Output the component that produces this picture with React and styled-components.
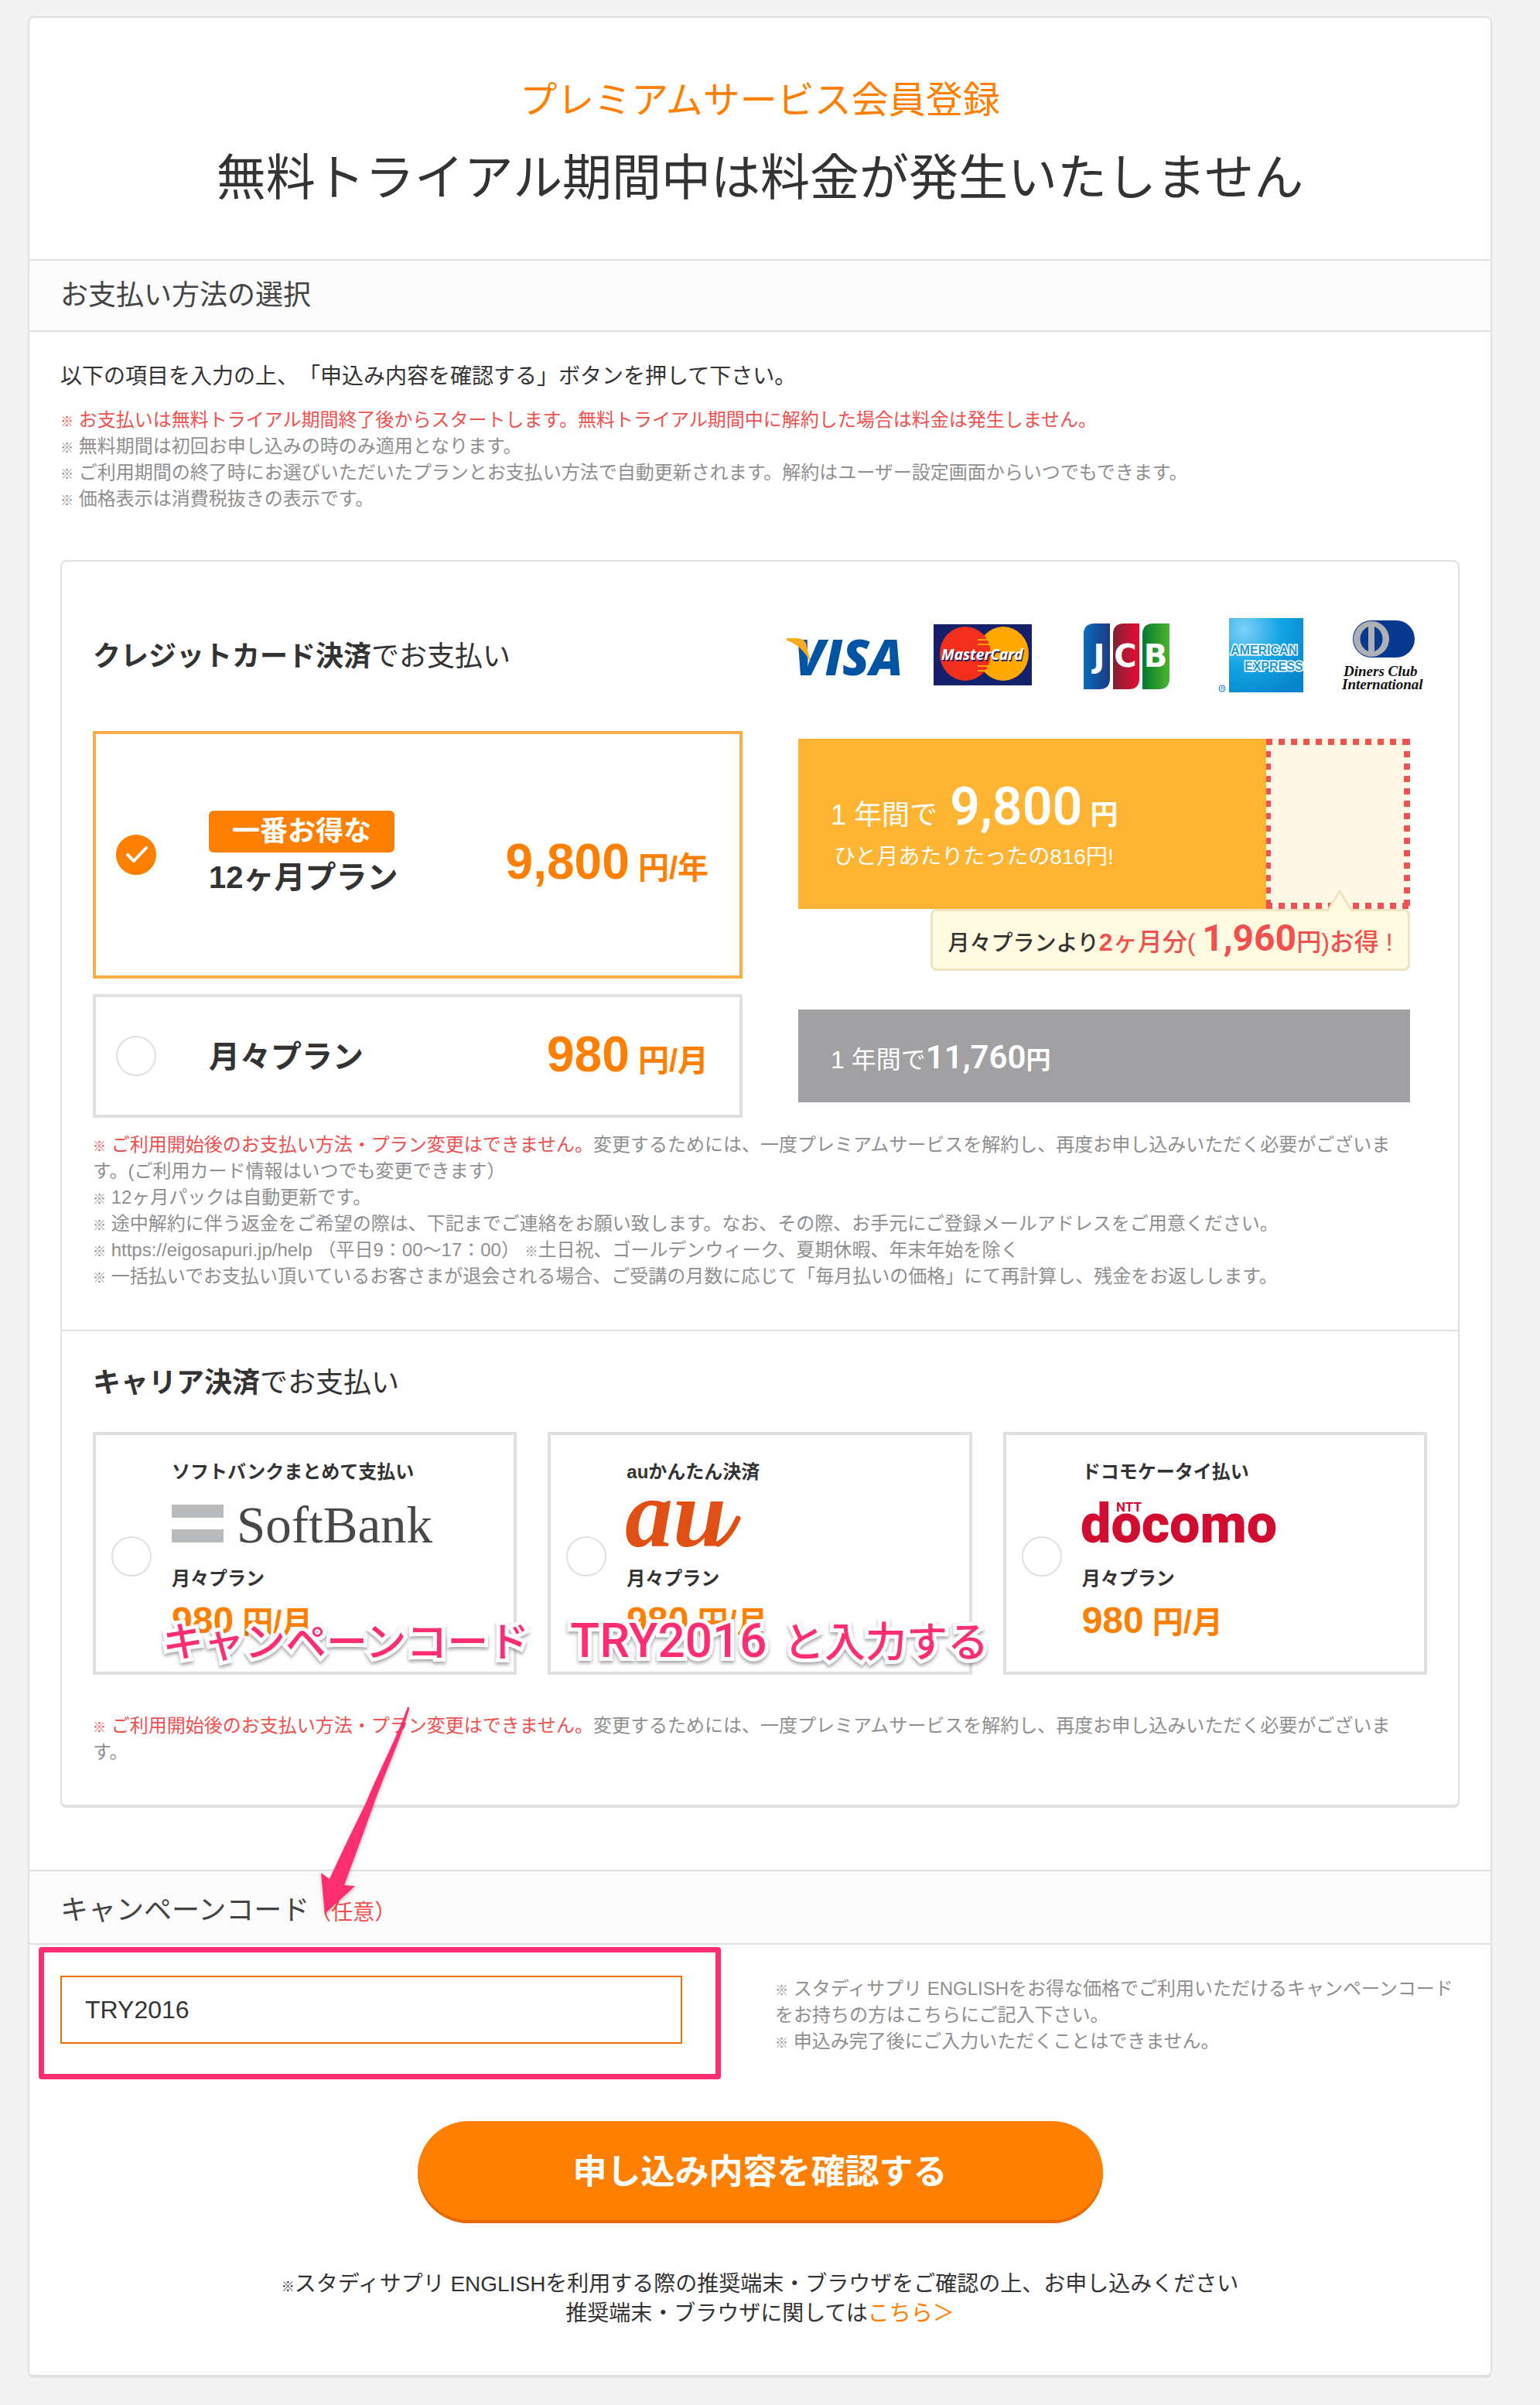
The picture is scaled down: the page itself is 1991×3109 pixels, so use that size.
import { useState } from "react";
import styled, { createGlobalStyle } from "styled-components";

const sans = `"Liberation Sans", "Noto Sans CJK JP", sans-serif`;

const carriers = [
  { id: "softbank", name: "ソフトバンクまとめて支払い", Logo: SoftBankLogo },
  { id: "au", name: "auかんたん決済", Logo: AuLogo },
  { id: "docomo", name: "ドコモケータイ払い", Logo: DocomoLogo },
];

const App = () => {
  const [plan, setPlan] = useState("year");
  const [code, setCode] = useState("TRY2016");

  return (
    <>
      <GlobalStyle />
      <Page>
        <Panel>
          <Hero>
            <HeroSub>プレミアムサービス会員登録</HeroSub>
            <HeroTitle>無料トライアル期間中は料金が発生いたしません</HeroTitle>
          </Hero>

          <Band>お支払い方法の選択</Band>
          <Payment>
            <Lead>以下の項目を入力の上、「申込み内容を確認する」ボタンを押して下さい。</Lead>
            <Notes>
              <li>
                <Red>
                  <Mark>※</Mark> お支払いは無料トライアル期間終了後からスタートします。無料トライアル期間中に解約した場合は料金は発生しません。
                </Red>
              </li>
              <li>
                <Mark>※</Mark> 無料期間は初回お申し込みの時のみ適用となります。
              </li>
              <li>
                <Mark>※</Mark> ご利用期間の終了時にお選びいただいたプランとお支払い方法で自動更新されます。解約はユーザー設定画面からいつでもできます。
              </li>
              <li>
                <Mark>※</Mark> 価格表示は消費税抜きの表示です。
              </li>
            </Notes>

            <Card>
              <Credit>
                <CreditHead>
                  <CardTitle>
                    <b>クレジットカード決済</b>でお支払い
                  </CardTitle>
                  <CardBrands />
                </CreditHead>
                <Plans>
                  <Plan $tall $on={plan === "year"}>
                    <Radio value="year" plan={plan} setPlan={setPlan} />
                    <PlanName>
                      <Badge>一番お得な</Badge>
                      12ヶ月プラン
                    </PlanName>
                    <Price $drop={26}>
                      <b>9,800</b> 円/年
                    </Price>
                  </Plan>
                  <YearChart>
                    <Bars>
                      <YearBar>
                        <BarLine>
                          1 年間で <BarNum $size={68}>9,800</BarNum> <b>円</b>
                        </BarLine>
                        <BarSub>ひと月あたりたったの816円!</BarSub>
                      </YearBar>
                      <Saved />
                    </Bars>
                    <Bubble>
                      <Tip viewBox="0 0 32 28">
                        <path d="M0 28 L16 2 L32 28" fill="#fffae0" stroke="#eee4bf" strokeWidth="3" />
                      </Tip>
                      月々プランより
                      <Saving>
                        <b>2</b>ヶ月分( <BubbleNum>1,960</BubbleNum>円)お得 !
                      </Saving>
                    </Bubble>
                  </YearChart>

                  <Plan $on={plan === "month"}>
                    <Radio value="month" plan={plan} setPlan={setPlan} />
                    <PlanName>月々プラン</PlanName>
                    <Price $drop={4}>
                      <b>980</b> 円/月
                    </Price>
                  </Plan>
                  <MonthChart>
                    <MonthBar>
                      1 年間で<BarNum $size={42}>11,760</BarNum>
                      <b>円</b>
                    </MonthBar>
                  </MonthChart>
                </Plans>
                <CardNotes>
                  <li>
                    <Red>
                      <Mark>※</Mark> ご利用開始後のお支払い方法・プラン変更はできません。
                    </Red>
                    変更するためには、一度プレミアムサービスを解約し、再度お申し込みいただく必要がございます。(ご利用カード情報はいつでも変更できます）
                  </li>
                  <li>
                    <Mark>※</Mark> 12ヶ月パックは自動更新です。
                  </li>
                  <li>
                    <Mark>※</Mark> 途中解約に伴う返金をご希望の際は、下記までご連絡をお願い致します。なお、その際、お手元にご登録メールアドレスをご用意ください。
                  </li>
                  <li>
                    <Mark>※</Mark> https://eigosapuri.jp/help （平日9：00〜17：00） <Mark>※</Mark>土日祝、ゴールデンウィーク、夏期休暇、年末年始を除く
                  </li>
                  <li>
                    <Mark>※</Mark> 一括払いでお支払い頂いているお客さまが退会される場合、ご受講の月数に応じて「毎月払いの価格」にて再計算し、残金をお返しします。
                  </li>
                </CardNotes>
              </Credit>

              <Carrier>
                <CardTitle>
                  <b>キャリア決済</b>でお支払い
                </CardTitle>
                <CarrierRow>
                  {carriers.map(({ id, name, Logo }) => (
                    <CarrierPlan key={id} $on={plan === id}>
                      <Radio value={id} plan={plan} setPlan={setPlan} />
                      <CarrierBody>
                        <span>{name}</span>
                        <Logo />
                        <span>月々プラン</span>
                        <Price $small $drop={4}>
                          <b>980</b> 円/月
                        </Price>
                      </CarrierBody>
                    </CarrierPlan>
                  ))}
                  <Callout>
                    キャンペーンコード　<big>TRY2016 </big>と入力する
                  </Callout>
                </CarrierRow>
                <CardNotes>
                  <li>
                    <Red>
                      <Mark>※</Mark> ご利用開始後のお支払い方法・プラン変更はできません。
                    </Red>
                    変更するためには、一度プレミアムサービスを解約し、再度お申し込みいただく必要がございます。
                  </li>
                </CardNotes>
              </Carrier>
            </Card>
          </Payment>

          <Campaign>
            <CodeBand>
              <label htmlFor="code">キャンペーンコード</label>
              <Optional>（任意）</Optional>
            </CodeBand>
            <Arrow viewBox="0 0 140 280">
              <path
                d="M127 2 Q129 0 129 4 C116 50 100 80 83 128 Q68 170 45 232 L59 233 L20 269 L15 216 L26 224 Q52 168 72 128 C90 84 112 44 127 2 Z"
                fill="#ff2e70"
              />
            </Arrow>
            <CodeRow>
              <CodeField>
                <CodeInput id="code" type="text" value={code} onChange={(e) => setCode(e.target.value)} />
              </CodeField>
              <Notes>
                <li>
                  <Mark>※</Mark> スタディサプリ ENGLISHをお得な価格でご利用いただけるキャンペーンコードをお持ちの方はこちらにご記入下さい。
                </li>
                <li>
                  <Mark>※</Mark> 申込み完了後にご入力いただくことはできません。
                </li>
              </Notes>
            </CodeRow>
          </Campaign>

          <Submit type="button">申し込み内容を確認する</Submit>
          <Foot>
            <Mark>※</Mark>スタディサプリ ENGLISHを利用する際の推奨端末・ブラウザをご確認の上、お申し込みください
            <br />
            推奨端末・ブラウザに関しては<a href="#browser">こちら＞</a>
          </Foot>
        </Panel>
      </Page>
    </>
  );
};

function Radio({ value, plan, setPlan }) {
  return (
    <RadioWrap>
      <RadioInput
        type="radio"
        name="plan"
        value={value}
        checked={plan === value}
        onChange={() => setPlan(value)}
      />
      {plan === value && (
        <Check viewBox="0 0 52 52">
          <path d="M15 26 L23 34 L39 17" fill="none" stroke="#fff" strokeWidth="4" strokeLinecap="round" strokeLinejoin="round" />
        </Check>
      )}
    </RadioWrap>
  );
}

function CardBrands() {
  return (
    <Brands viewBox="0 0 828 96" role="img" aria-label="VISA MasterCard JCB American Express Diners Club">
      <defs>
        <linearGradient id="jb" x1="0" x2="1"><stop offset="0" stopColor="#0a6cb8" /><stop offset="1" stopColor="#1c3a86" /></linearGradient>
        <linearGradient id="jr" x1="0" x2="1"><stop offset="0" stopColor="#7d2333" /><stop offset="1" stopColor="#ec0a35" /></linearGradient>
        <linearGradient id="jg" x1="0" x2="1"><stop offset="0" stopColor="#047a2e" /><stop offset="1" stopColor="#4cb52f" /></linearGradient>
        <radialGradient id="ax" cx="0.2" cy="0.15" r="1"><stop offset="0" stopColor="#7fd0f7" /><stop offset="0.5" stopColor="#12a5e4" /><stop offset="1" stopColor="#0784cb" /></radialGradient>
      </defs>

      <text x="10" y="74" fontFamily="Open Sans" fontSize="64" fontWeight="800" fontStyle="italic" fill="#0054a4">VISA</text>
      <path d="M0 26 H14 Q24 26 26 36 L31 58 Q20 35 0 29 Z" fill="#fbab1b" />

      <rect x="190" y="8" width="127" height="79" fill="#15206c" />
      <ellipse cx="280" cy="46" rx="33" ry="35" fill="#ffa800" />
      <ellipse cx="231" cy="46" rx="33" ry="35" fill="#f22e1c" />
      <path d="M247 28 H264 M247 34 H266 M247 62 H266 M247 68 H264" stroke="#ffa800" strokeWidth="2" />
      <text x="201" y="56" fontFamily="Open Sans" fontSize="19" fontWeight="700" fontStyle="italic" fill="#15206c">MasterCard</text>
      <text x="200" y="54" fontFamily="Open Sans" fontSize="19" fontWeight="700" fontStyle="italic" fill="#fff">MasterCard</text>

      <path d="M384 21 Q384 7 398 7 H418 V78 Q418 92 404 92 H384 Z" fill="url(#jb)" />
      <path d="M422 21 Q422 7 436 7 H456 V78 Q456 92 442 92 H422 Z" fill="url(#jr)" />
      <path d="M460 21 Q460 7 474 7 H495 V78 Q495 92 481 92 H460 Z" fill="url(#jg)" />
      <g fontFamily="DejaVu Sans" fontSize="40" fontWeight="700" fill="#fff" textAnchor="middle">
        <text x="404" y="63">J</text>
        <text x="438" y="63">C</text>
        <text x="477" y="63">B</text>
      </g>

      <rect x="572" y="0" width="96" height="96" fill="url(#ax)" />
      <g fontFamily="Liberation Sans" fontWeight="700" fill="#1a97d6" stroke="#fff" strokeWidth="3" paintOrder="stroke">
        <text x="574" y="47" fontSize="16">AMERICAN</text>
        <text x="592" y="68" fontSize="16">EXPRESS</text>
      </g>
      <circle cx="563" cy="91" r="4" fill="none" stroke="#1277b8" />
      <text x="561" y="93" fontFamily="Liberation Sans" fontSize="6" fill="#1277b8">R</text>

      <rect x="732" y="3" width="80" height="48" rx="24" fill="#07398f" />
      <ellipse cx="756" cy="27" rx="23" ry="23" fill="#aeb0b3" />
      <path d="M752 11 A16 17 0 0 0 752 43 Z M760 11 A16 17 0 0 1 760 43 Z" fill="#07398f" />
      <g fontFamily="Liberation Serif" fontSize="19" fontWeight="700" fontStyle="italic" fill="#111">
        <text x="720" y="75">Diners Club</text>
        <text x="718" y="92">International</text>
      </g>
    </Brands>
  );
}

function SoftBankLogo() {
  return (
    <Logo viewBox="0 0 360 64" role="img" aria-label="SoftBank">
      <path d="M0 6 H67 V23 H0 Z M0 38 H67 V55 H0 Z" fill="#b9bbbd" />
      <text x="84" y="55" fontFamily="Liberation Serif" fontSize="67" fontWeight="400" fill="#48484a">SoftBank</text>
    </Logo>
  );
}

function AuLogo() {
  return (
    <Logo viewBox="0 0 360 64" role="img" aria-label="au">
      <text x="-2" y="60" fontFamily="Liberation Serif" fontSize="124" fontWeight="700" fontStyle="italic" fill="#e05015">au</text>
      <path d="M118 57 Q132 50 144 24" fill="none" stroke="#e05015" strokeWidth="7" strokeLinecap="round" />
    </Logo>
  );
}

function DocomoLogo() {
  return (
    <Logo viewBox="0 0 360 64" role="img" aria-label="NTT docomo">
      <text x="-2" y="55" fontFamily="Roboto" fontSize="70" fontWeight="900" fill="#d20b31">docomo</text>
      <text x="44" y="15" fontFamily="Roboto" fontSize="17" fontWeight="700" fill="#d20b31">NTT</text>
    </Logo>
  );
}

const GlobalStyle = createGlobalStyle`
  *, *::after {
    box-sizing: border-box;
  }
  body {
    margin: 0;
    background: #f3f3f3;
    color: #333;
    font-family: ${sans};
    text-spacing-trim: space-all;
  }
  input, button {
    font-family: inherit;
  }
`;

const Page = styled.div`
  padding: 21px 62px 36px 36px;
`;

const Panel = styled.main`
  background: #fff;
  border: 2px solid #e0e0e0;
  border-bottom-width: 4px;
  border-radius: 8px;
  padding-bottom: 60px;
`;

const Hero = styled.header`
  padding: 75px 40px 65px;
  text-align: center;
`;

const HeroSub = styled.p`
  margin: 0 0 28px;
  color: #ff8000;
  font-size: 48px;
  line-height: 64px;
`;

const HeroTitle = styled.h1`
  margin: 0;
  font-size: 64px;
  font-weight: 400;
  line-height: 80px;
`;

const Band = styled.h2`
  margin: 0;
  padding: 0 40px;
  border: solid #e0e0e0;
  border-width: 2px 0;
  background: #fbfbfb;
  color: #444;
  font-size: 36px;
  font-weight: 400;
  line-height: 90px;
`;

const CodeBand = styled(Band)`
  padding-top: 12px;
  line-height: 78px;
`;

const Optional = styled.span`
  color: #f0504f;
  font-size: 28px;
`;

const Payment = styled.section`
  padding: 38px 40px 80px;
`;

const Lead = styled.p`
  margin: 0 0 19px;
  font-size: 28px;
  line-height: 40px;
`;

const Notes = styled.ul`
  margin: 0;
  padding: 0;
  list-style: none;
  color: #8f8f8f;
  font-size: 24px;
  line-height: 34px;
`;

const CardNotes = styled(Notes)`
  padding-right: 24px;
`;

const Red = styled.span`
  color: #f0504f;
`;

const Mark = styled.span`
  font-family: "Noto Sans CJK JP", sans-serif;
  font-size: 17px;
  font-weight: 700;
  line-height: 1;
`;

const Card = styled.div`
  margin-top: 62px;
  border: 2px solid #e0e0e0;
  border-bottom-width: 4px;
  border-radius: 8px;
`;

const Credit = styled.section`
  padding: 73px 40px 52px;
  border-bottom: 2px solid #e0e0e0;
`;

const CreditHead = styled.div`
  display: flex;
  align-items: center;
  justify-content: space-between;
  margin-bottom: 50px;
`;

const CardTitle = styled.h3`
  margin: 0;
  padding-top: 4px;
  font-size: 36px;
  font-weight: 400;
  line-height: 50px;
`;

const Brands = styled.svg`
  width: 828px;
  height: 96px;
  overflow: visible;
`;

const Plans = styled.div`
  display: grid;
  grid-template-columns: minmax(0, 840fr) minmax(0, 813fr);
  gap: 20px 72px;
  margin-bottom: 18px;
`;

const Plan = styled.label`
  display: flex;
  align-items: center;
  height: ${({ $tall }) => ($tall ? 320 : 160)}px;
  padding: 0 40px 0 26px;
  border: 4px solid ${({ $on }) => ($on ? "#fbae45" : "#e0e0e0")};
`;

const RadioWrap = styled.span`
  position: relative;
  flex: none;
  width: 52px;
  height: 52px;
`;

const RadioInput = styled.input`
  appearance: none;
  display: block;
  width: 52px;
  height: 52px;
  margin: 0;
  border: 2px solid #e0e0e0;
  border-radius: 50%;
  background: #fff;

  &:checked {
    border-color: #ff8000;
    background: #ff8000;
  }
`;

const Check = styled.svg`
  position: absolute;
  inset: 0;
  pointer-events: none;
`;

const PlanName = styled.span`
  flex: 1;
  margin-left: 68px;
  padding-top: 2px;
  font-size: 40px;
  font-weight: 700;
  line-height: 60px;
`;

const Badge = styled.span`
  display: block;
  width: 240px;
  margin-bottom: 2px;
  border-radius: 6px;
  background: #ff8000;
  color: #fff;
  font-size: 36px;
  line-height: 54px;
  text-align: center;
`;

const Price = styled.span`
  padding-top: ${({ $drop }) => $drop}px;
  color: #ff8000;
  font-size: 40px;
  font-weight: 700;
  line-height: 64px;

  b {
    font-size: ${({ $small }) => ($small ? 48 : 64)}px;
  }
`;

const YearChart = styled.div`
  display: flex;
  flex-direction: column;
  align-items: flex-end;
  padding: 10px 22px 0 0;
`;

const Bars = styled.div`
  display: flex;
  width: 100%;
  height: 220px;
`;

const YearBar = styled.div`
  flex: 1;
  padding: 54px 0 0 42px;
  background: #ffb533;
  color: #fff;
`;

const BarLine = styled.div`
  font-size: 36px;
  line-height: 72px;
  white-space: nowrap;

  ${() => BarNum} {
    margin-left: 6px;
  }
`;

const BarNum = styled.b`
  font-family: Roboto, sans-serif;
  font-size: ${({ $size }) => $size}px;
  font-weight: 600;
  line-height: 1;
`;

const BarSub = styled.div`
  padding-left: 4px;
  font-size: 28px;
  line-height: 36px;
`;

/* the two months left over, framed by square dots */
const Saved = styled.div`
  width: 186px;
  background:
    repeating-linear-gradient(90deg, #ee5253 0 8px, transparent 8px 16px) top / 100% 8px no-repeat,
    repeating-linear-gradient(90deg, #ee5253 0 8px, transparent 8px 16px) bottom / 100% 8px no-repeat,
    repeating-linear-gradient(#ee5253 0 8px, transparent 8px 16px) left / 6px 100% no-repeat,
    repeating-linear-gradient(#ee5253 0 8px, transparent 8px 16px) right / 8px 100% no-repeat,
    #fff8e6;
`;

const Bubble = styled.div`
  position: relative;
  width: 620px;
  height: 80px;
  border: 3px solid #eee4bf;
  border-radius: 8px;
  background: #fffae0;
  font-size: 28px;
  font-weight: 500;
  line-height: 80px;
  text-align: center;
  white-space: nowrap;
`;

const Tip = styled.svg`
  position: absolute;
  top: -28px;
  right: 72px;
  width: 32px;
  height: 28px;
`;

const Saving = styled.span`
  color: #f0504f;
  font-size: 32px;
`;

const BubbleNum = styled.b`
  font-family: Roboto, sans-serif;
  font-size: 48px;
  line-height: 1;
`;

const MonthChart = styled.div`
  padding: 20px 22px 20px 0;
`;

const MonthBar = styled.div`
  height: 120px;
  padding-left: 42px;
  background: #a1a1a3;
  color: #fff;
  font-size: 32px;
  line-height: 130px;
  white-space: nowrap;
`;

const Carrier = styled.section`
  padding: 38px 40px 51px;
`;

const CarrierRow = styled.div`
  position: relative;
  display: grid;
  grid-template-columns: repeat(3, minmax(0, 1fr));
  gap: 40px;
  margin: 38px 0 49px;
`;

const CarrierPlan = styled.label`
  display: flex;
  align-items: center;
  gap: 26px;
  padding: 30px 20px 32px;
  border: 4px solid ${({ $on }) => ($on ? "#fbae45" : "#e0e0e0")};

  ${RadioWrap} {
    margin-top: 10px;
  }
`;

const CarrierBody = styled.span`
  display: flex;
  flex: 1;
  flex-direction: column;
  font-size: 24px;
  font-weight: 700;
  line-height: 36px;
`;

const Logo = styled.svg`
  width: 360px;
  height: 64px;
  margin: 18px 0 20px;
  overflow: visible;
`;

const Callout = styled.p`
  position: absolute;
  top: 232px;
  left: 90px;
  margin: 0;
  color: #ff2e70;
  font-size: 53px;
  font-weight: 500;
  line-height: 76px;
  white-space: nowrap;
  -webkit-text-stroke: 10px #fff;
  paint-order: stroke fill;
  filter: drop-shadow(0 3px 2px rgba(0, 0, 0, 0.35));

  big {
    margin-right: 6px;
    font-family: Roboto, sans-serif;
    font-size: 62px;
  }
`;

const Campaign = styled.section`
  position: relative;
`;

const Arrow = styled.svg`
  position: absolute;
  top: -212px;
  left: 362px;
  width: 140px;
  height: 280px;
  filter: drop-shadow(0 2px 2px rgba(0, 0, 0, 0.3));
`;

const CodeRow = styled.div`
  display: grid;
  grid-template-columns: minmax(0, 804fr) minmax(0, 885fr);
  gap: 120px;
  padding: 40px;
`;

const CodeField = styled.div`
  position: relative;

  &::after {
    content: "";
    position: absolute;
    top: -37px;
    right: -50px;
    left: -28px;
    height: 171px;
    border: 7px solid #ff2e70;
    border-radius: 4px;
    pointer-events: none;
  }
`;

const CodeInput = styled.input`
  display: block;
  width: 100%;
  height: 88px;
  padding: 0 30px;
  border: 2px solid #ee6c00;
  background: #fff;
  color: #333;
  font-size: 32px;
`;

const Submit = styled.button`
  display: block;
  width: 886px;
  height: 132px;
  margin: 46px auto 60px;
  padding: 0 0 8px;
  border: 0;
  border-radius: 66px;
  background: #ff8000;
  box-shadow: inset 0 -4px #ea6700;
  color: #fff;
  font-size: 44px;
  font-weight: 700;
`;

const Foot = styled.p`
  margin: 0;
  font-size: 28px;
  line-height: 38px;
  text-align: center;

  a {
    color: #ff8000;
    text-decoration: none;
  }
`;

export default App;
